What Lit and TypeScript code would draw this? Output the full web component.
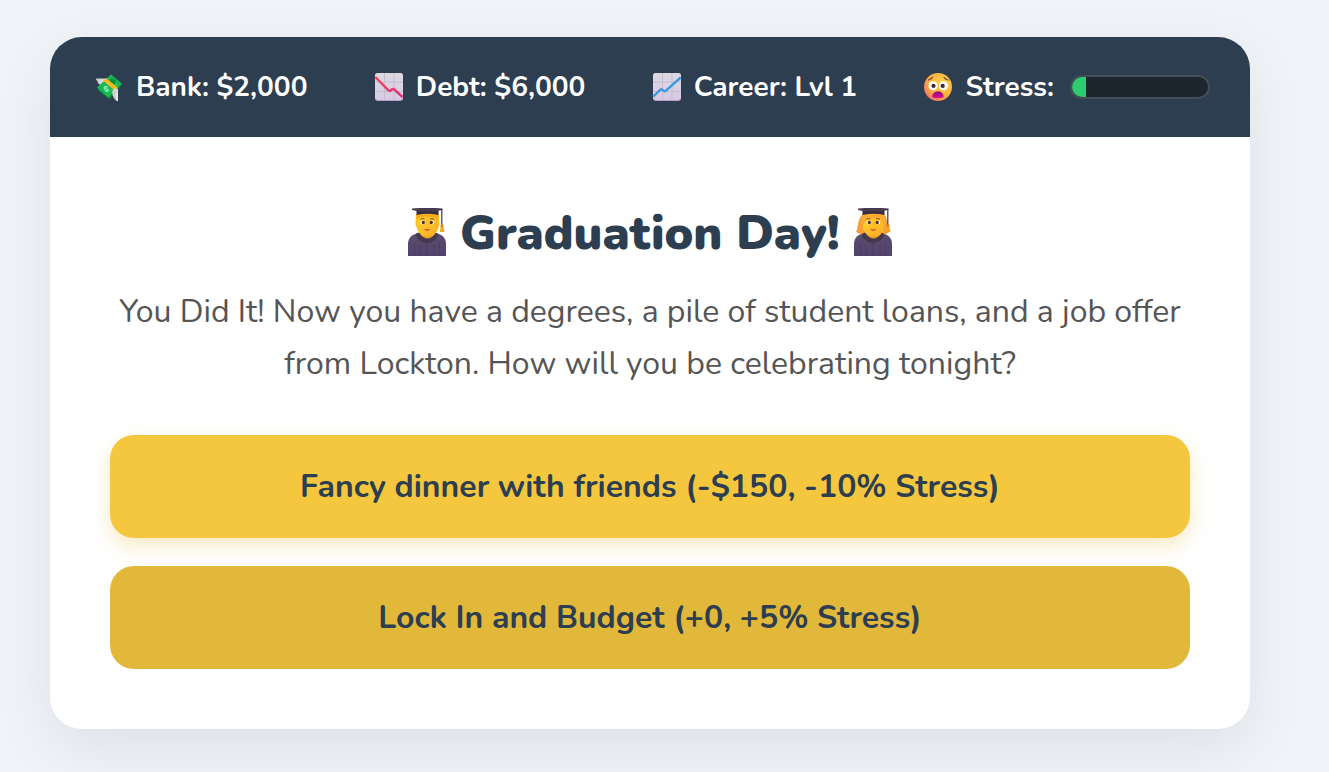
import { LitElement, html, css, svg, TemplateResult } from "lit";
import { customElement, state } from "lit/decorators.js";
import { styleMap } from "lit/directives/style-map.js";

const moneyIcon = html`<svg class="icon" viewBox="0 0 38 32" aria-hidden="true">
  <defs>
    <linearGradient id="wing" x1="0" y1="0" x2="1" y2="1"><stop offset="0" stop-color="#c9c8cc"/><stop offset="1" stop-color="#f2f0f2"/></linearGradient>
    <linearGradient id="note" x1="0" y1="0" x2="1" y2="1"><stop offset="0" stop-color="#16b955"/><stop offset="1" stop-color="#1cc860"/></linearGradient>
  </defs>
  <path d="M6 6.500h14l-8 10c-1-1.500-2-2.500-2-4-1.500-.5-2.500-1.500-2.500-3.500C6.500 8.500 6 7.500 6 6.500z" fill="url(#wing)"/>
  <path d="M22 3.500 32.500 12.500 19.500 27.500 7.500 18z" fill="#0b7f3b"/>
  <path d="M21 2.500 31.500 11.500 18.500 25.500 7 15.500z" fill="url(#note)"/>
  <path d="M21 4.800 29 11.500 18.300 23 9.500 15.500z" fill="none" stroke="#0fa54b" stroke-width=".8"/>
  <circle cx="22.500" cy="9.500" r="3" fill="#0b9141"/>
  <path d="M17.500 15.500c-1.700-1.500-4-.6-3 .8s3.300 0 3.600 1.500-2 2-3.500.5" fill="none" stroke="#a9edc0" stroke-width="1.200"/>
  <path d="m13.500 9 2.800-2.800L27.500 15.500 25 18.800z" fill="#fbb81e"/>
  <path d="M22.500 18.500c1-2.300 3.500-2.700 5.500-1.500v12c-1.200 0-2-.5-2.400-1.500-1.400-.3-2-1.300-2-2.500-1.200-1.500-1.600-4-1.100-6.500z" fill="url(#wing)"/>
  <path d="M25 18.500c-.6 2.500-.4 5.500.8 8.500" fill="none" stroke="#b4b1b6" stroke-width=".7"/>
</svg>`;

const chart = (id: string, colours: [string, string], line: string) => html`<svg class="icon" viewBox="0 0 38 32" aria-hidden="true">
  <defs>
    <linearGradient id=${id + "-bg"} x1="0" y1="0" x2="0" y2="1"><stop offset="0" stop-color="#dcd9e2"/><stop offset="1" stop-color="#d8c9e4"/></linearGradient>
    <linearGradient id=${id + "-line"} x1="0" y1="0" x2="1" y2="1"><stop offset="0" stop-color=${colours[0]}/><stop offset="1" stop-color=${colours[1]}/></linearGradient>
  </defs>
  <rect x="5" y="1" width="28" height="28" rx="3" fill="#b99fcb"/>
  <rect x="5" y="1" width="28" height="27" rx="3" fill=${`url(#${id}-bg)`}/>
  <path d="M14.500 1v27M24 1v27M5 10h28M5 19.500h28" stroke="#c4bdcc" stroke-width="1"/>
  <path d=${line} fill="none" stroke=${`url(#${id}-line)`} stroke-width="2.400" stroke-linejoin="round"/>
</svg>`;

const debtIcon = chart("debt", ["#f9434d", "#d72f83"], "M5.300 5 18.500 18.300q1.500 1.700 3-.6 2-1.500 3.300.3L32.700 25.200");
const careerIcon = chart("career", ["#3d8be0", "#3aa5e4"], "M5.300 24.500 12 18q1.800-1.500 3 .3t3 .3L32.700 5.500");

const stressIcon = html`<svg class="icon" viewBox="0 0 38 32" aria-hidden="true">
  <defs>
    <radialGradient id="face" cx=".65" cy=".35" r=".8"><stop offset="0" stop-color="#ffd549"/><stop offset=".6" stop-color="#fcae3e"/><stop offset="1" stop-color="#ef5e7b"/></radialGradient>
    <linearGradient id="mouth" x1="0" y1="0" x2="0" y2="1"><stop offset="0" stop-color="#8e0b79"/><stop offset="1" stop-color="#dd0c9e"/></linearGradient>
  </defs>
  <circle cx="19" cy="15" r="14" fill="url(#face)"/>
  <path d="M9.500 8c1.500-.4 3-1.300 4-2.600M29 8c-1.500-.4-3-1.300-4-2.600" fill="none" stroke="#65432f" stroke-width="1.100" stroke-linecap="round"/>
  <circle cx="14" cy="13.800" r="4.500" fill="#fff"/><circle cx="24.500" cy="13.800" r="4.500" fill="#fff"/>
  <circle cx="14.500" cy="13.900" r="2.100" fill="#3b2735"/><circle cx="23.700" cy="13.900" r="2.100" fill="#3b2735"/>
  <path d="M13.300 25c0-3.800 2.300-5.600 5.700-5.600s5.700 1.800 5.700 5.600c0 1.300-11.400 1.300-11.400 0z" fill="url(#mouth)"/>
</svg>`;

const graduate = (id: string, back: TemplateResult, fringe: TemplateResult) => html`<svg class="grad" viewBox="0 1 40 50" aria-hidden="true">
  <defs>
    <linearGradient id=${id + "-gown"} x1="0" y1="0" x2="0" y2="1"><stop offset="0" stop-color="#5c4c6e"/><stop offset="1" stop-color="#52436d"/></linearGradient>
    <linearGradient id=${id + "-skin"} x1="0" y1="0" x2="1" y2="1"><stop offset="0" stop-color="#ffd02c"/><stop offset="1" stop-color="#f9ae26"/></linearGradient>
  </defs>
  <path d="M1 49V37c0-7 5-10 11-11h16c6 1 11 4 11 11v12z" fill=${`url(#${id}-gown)`}/>
  ${back}
  <path d="M7.500 36v13M13 38v11M27 38v11M32.500 36v13M20 34v15" stroke="#493b5c" stroke-width=".8"/>
  <path d="M8.500 27 13 25h14l4.500 2c-1 5-6 9-11.500 9S9.500 32 8.500 27z" fill="#453850"/>
  <path d="M13.500 24h14v3.500c-1.500 2-4.500 4-7 4s-5.500-2-7-4z" fill="#eda022"/>
  <path d="M10 8h21v12c0 5.500-5 9.500-10.500 9.500S10 25.500 10 20z" fill=${`url(#${id}-skin)`}/>
  ${fringe}
  <path d="M13.500 12.300q2-1.200 4-.2M23 12.100q2-1 4 .2" fill="none" stroke="#a15a20" stroke-width="1.100"/>
  <ellipse cx="15.800" cy="15.500" rx="2.400" ry="1.900" fill="#fff"/><ellipse cx="24.700" cy="15.500" rx="2.400" ry="1.900" fill="#fff"/>
  <circle cx="16.300" cy="15.500" r="1.700" fill="#59312b"/><circle cx="24.200" cy="15.500" r="1.700" fill="#59312b"/>
  <path d="M17 21.800q3.200 1.500 6.400 0-3.200 4-6.400 0z" fill="#d0293a"/>
  <path d="M9.500 3.500h22V8q-11-2.500-22 0z" fill="#372d3f"/>
  <path d="m5 1.500 7-.5h17l6.500.5v1.600L28 4.400H12L5 3.100z" fill="#493b53"/>
  <path d="M34.800 2.300v17" stroke="#51415d" stroke-width="1.300"/>
  <path d="M34 19h2l1.600 6h-4.800z" fill="#f2a51e"/><circle cx="35" cy="19" r="1.700" fill="#e18b19"/>
</svg>`;

const graduateShort = graduate(
  "short",
  svg`<path d="M9 7h23l.5 11-2 4h-20l-2-4z" fill="#f9bd20"/>` as TemplateResult,
  svg`<path d="M9.500 7.500Q20.500 4 31.500 7.500L31 12.500l-4-2.500H14L10 12.500z" fill="#f2ac1d"/>` as TemplateResult
);
const graduateLong = graduate(
  "long",
  svg`<path d="M9.500 7.500h22c2.500 2.500 2 6.500 3.500 9.500 1.500 3 1.500 5.500.5 8.500-2.500 2-5 2.500-7 2.500H12c-3.500 0-6.500-1-9-3.500 1.500-1.500 1-4.500 1.800-7C5.800 14 6.500 10 9.500 7.500z" fill="#fa9f36"/>` as TemplateResult,
  svg`<path d="M9.500 7.500Q20.500 4 31.500 7.500l1 10.500c-3-1.500-5-5-6-8-4 2-8 2-12 0-1 3-3 6.500-6 8z" fill="#fdaa35"/>` as TemplateResult
);

interface Choice {
  label: string;
  active: boolean;
}

@customElement("app-root")
export class AppRoot extends LitElement {
  static styles = css`
    :host {
      display: block;
      min-height: 100vh;
      box-sizing: border-box;
      padding: 37px 79px 43px 50px;
      background: #f0f4f8;
      color: #2c3e50;
      font-family: Nunito, Lato, "Open Sans", sans-serif;
    }
    .card {
      border-radius: 32px;
      background: #fff;
      box-shadow: 0 20px 60px rgba(0, 0, 0, 0.08);
    }
    .stats {
      display: flex;
      align-items: center;
      justify-content: space-between;
      min-height: 100px;
      box-sizing: border-box;
      padding: 0 40px;
      border-radius: 32px 32px 0 0;
      background: #2c3e50;
      color: #fff;
      font-size: 28px;
      font-weight: 700;
      line-height: 39px;
    }
    .stat {
      display: flex;
      align-items: center;
      gap: 8px;
      white-space: nowrap;
    }
    .icon {
      width: 38px;
      height: 32px;
      padding-top: 2px;
    }
    .track {
      width: 140px;
      height: 24px;
      margin-left: 8px;
      box-sizing: border-box;
      overflow: hidden;
      border: 2px solid #444c56;
      border-radius: 12px;
      background: #1c262f;
    }
    .fill {
      height: 100%;
      background: #2ecc71;
    }
    .scene {
      padding: 60px;
      text-align: center;
    }
    h1 {
      display: flex;
      align-items: center;
      justify-content: center;
      gap: 13px;
      margin: 0 0 17px;
      font-size: 48px;
      font-weight: 900;
      line-height: 72px;
    }
    .grad {
      width: 40px;
      height: 50px;
    }
    p {
      margin: 0;
      color: #555;
      font-size: 32px;
      line-height: 52px;
    }
    .choices {
      display: grid;
      gap: 28px;
      margin-top: 45px;
    }
    .choice {
      padding: 30px;
      border: 0;
      border-radius: 24px;
      background: #f5c73f;
      box-shadow: 0 8px 20px rgba(225, 183, 58, 0.3);
      color: inherit;
      font: inherit;
      font-size: 32px;
      font-weight: 700;
      line-height: 43px;
      cursor: pointer;
    }
    .choice.active {
      background: #e2b83b;
      box-shadow: none;
    }
  `;

  @state() private stress = 10;

  private choices: Choice[] = [
    { label: "Fancy dinner with friends (-$150, -10% Stress)", active: false },
    { label: "Lock In and Budget (+0, +5% Stress)", active: true },
  ];

  render() {
    return html`<main class="card">
      <header class="stats">
        <div class="stat">${moneyIcon}<span>Bank: $2,000</span></div>
        <div class="stat">${debtIcon}<span>Debt: $6,000</span></div>
        <div class="stat">${careerIcon}<span>Career: Lvl 1</span></div>
        <div class="stat">
          ${stressIcon}<span id="stress">Stress:</span>
          <div class="track" role="progressbar" aria-labelledby="stress" aria-valuemin="0" aria-valuemax="100" aria-valuenow=${this.stress}>
            <div class="fill" style=${styleMap({ width: `${this.stress}%` })}></div>
          </div>
        </div>
      </header>
      <section class="scene">
        <h1>${graduateShort}<span>Graduation Day!</span>${graduateLong}</h1>
        <p>You Did It! Now you have a degrees, a pile of student loans, and a job offer from Lockton. How will you be celebrating tonight?</p>
        <div class="choices">
          ${this.choices.map((c) => html`<button type="button" class="choice ${c.active ? "active" : ""}">${c.label}</button>`)}
        </div>
      </section>
    </main>`;
  }
}
